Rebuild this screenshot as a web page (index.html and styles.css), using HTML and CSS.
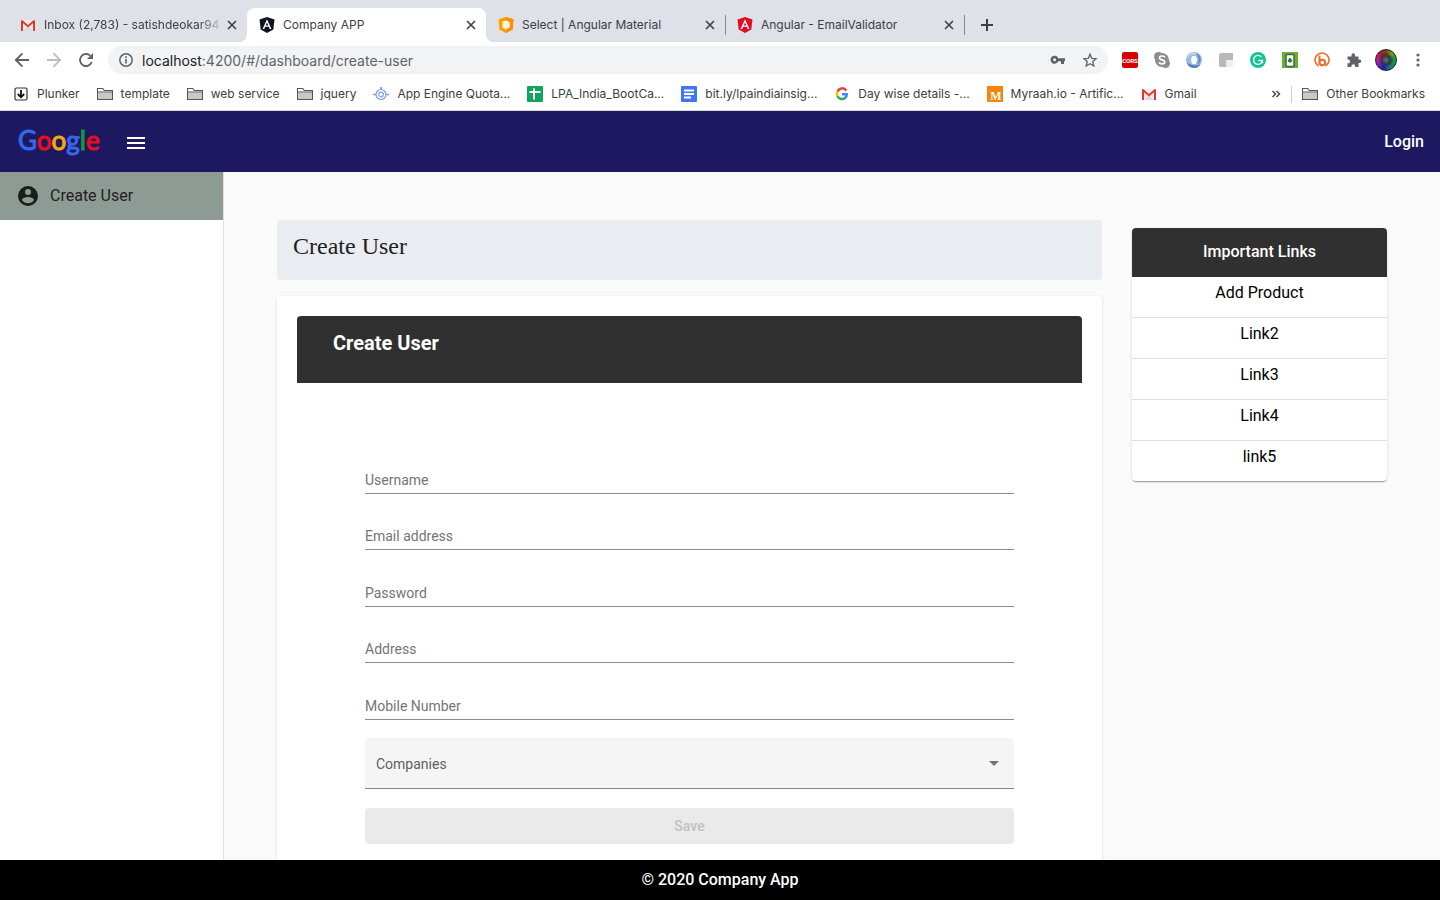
FILE: index.html
```html
<!DOCTYPE html>
<html lang="en">
<head>
<meta charset="utf-8">
<title>Company APP</title>
<link rel="stylesheet" href="styles.css">
</head>
<body>
<svg class="defs" aria-hidden="true">
  <symbol id="folder" viewBox="0 0 16 16"><path d="M.5 13.500V2.500h5.300l1.500 2h8.200v9z" fill="#fff" stroke="#555" stroke-width="1.100"/><path d="M1 6.500h14V13H1z" fill="#c8c8c8"/><path d="M1 6h14" stroke="#555"/></symbol>
  <symbol id="close" viewBox="0 0 16 16"><path d="M4 4l8 8M12 4l-8 8" stroke="#3c4043" stroke-width="1.600"/></symbol>
  <symbol id="gmail" viewBox="0 0 16 16"><path d="M1 3h14v11H1z" fill="#eee"/><path d="M3 14l5-5 5 5z" fill="#dcdcdc"/><path d="M1 3.200h1.600L8 8l5.400-4.800H15V14h-2V6.300L8 10.500 3 6.300V14H1z" fill="#dd3b2d"/></symbol>
  <symbol id="angular" viewBox="0 0 16 16"><path d="M8 0l7.500 2.600-1.200 10L8 16l-6.300-3.400L.5 2.600z" fill="currentColor"/><path d="M8 2.200L3.600 12h1.700l.9-2.200h3.600l.9 2.200h1.700zM8 5.500l1.300 3H6.700z" fill="#fff"/></symbol>
</svg>

<header class="browser">
  <div class="tabs">
    <div class="tab"><svg class="icon"><use href="#gmail"/></svg><span class="tab-title fade">Inbox (2,783) - satishdeokar94</span><button class="icon-btn" aria-label="Close tab"><svg class="icon"><use href="#close"/></svg></button></div>
    <div class="tab active"><svg class="icon dark"><use href="#angular"/></svg><span class="tab-title">Company APP</span><button class="icon-btn" aria-label="Close tab"><svg class="icon"><use href="#close"/></svg></button></div>
    <div class="tab divided"><svg class="icon" viewBox="0 0 16 16"><path d="M8 0l7.500 2.300-.8 10.200L8 16l-6.700-3.500L.5 2.300z" fill="#ffa000"/><path d="M8 0l7.500 2.300-.8 10.200L8 16z" fill="#ff8f00"/><path d="M4.500 4.500L8 3.500l3.500 1.500.5 5L8 12.500l-3.500-2z" fill="#fff3e0"/></svg><span class="tab-title">Select | Angular Material</span><button class="icon-btn" aria-label="Close tab"><svg class="icon"><use href="#close"/></svg></button></div>
    <div class="tab divided"><svg class="icon red"><use href="#angular"/></svg><span class="tab-title">Angular - EmailValidator</span><button class="icon-btn" aria-label="Close tab"><svg class="icon"><use href="#close"/></svg></button></div>
    <button class="icon-btn new-tab" aria-label="New tab"><svg class="icon" viewBox="0 0 16 16"><path d="M8 2v12M2 8h12" stroke="#3c4043" stroke-width="2"/></svg></button>
  </div>

  <div class="toolbar">
    <div class="nav">
      <button class="icon-btn" aria-label="Back"><svg class="icon" viewBox="0 0 16 16"><path d="M15 8H2M8.500 1.300L1.800 8l6.700 6.700" fill="none" stroke="#5f6368" stroke-width="1.900"/></svg></button>
      <button class="icon-btn" aria-label="Forward"><svg class="icon" viewBox="0 0 16 16"><path d="M1 8h13M7.500 1.300L14.200 8l-6.700 6.700" fill="none" stroke="#bcbec1" stroke-width="1.900"/></svg></button>
      <button class="icon-btn" aria-label="Reload"><svg class="icon" viewBox="0 0 16 16"><path d="M13.700 10A6 6 0 1 1 12.300 3.800" fill="none" stroke="#5f6368" stroke-width="1.900"/><path d="M15 1v6H9z" fill="#5f6368"/></svg></button>
    </div>
    <div class="address">
      <svg class="icon" viewBox="0 0 16 16"><circle cx="8" cy="8" r="6.200" fill="none" stroke="#5f6368" stroke-width="1.500"/><path d="M8 7v4.500M8 4.300v1.600" stroke="#5f6368" stroke-width="1.600"/></svg>
      <span class="url"><b>localhost</b>:4200/#/dashboard/create-user</span>
      <button class="icon-btn" aria-label="Saved passwords"><svg class="icon" viewBox="0 0 16 16"><path d="M8.200 6.200a4 4 0 1 0 0 3H11V12h3V9.200h1V6.200zM4.600 9.200a1.500 1.500 0 1 1 0-3 1.500 1.500 0 0 1 0 3z" fill="#5f6368"/></svg></button>
      <button class="icon-btn" aria-label="Bookmark page"><svg class="icon" viewBox="0 0 16 16"><path d="M8 2.200l1.700 4.100 4.400.4-3.300 2.900 1 4.400L8 11.700 4.200 14l1-4.400-3.300-2.900 4.400-.4z" fill="none" stroke="#5f6368" stroke-width="1.300"/></svg></button>
    </div>
    <div class="extensions">
      <svg class="icon" viewBox="0 0 16 16"><rect width="16" height="16" rx="2" fill="#d40000"/><text x="8" y="10.500" class="cors">CORS</text></svg>
      <svg class="icon" viewBox="0 0 16 16"><g fill="#8d8d8d"><circle cx="4.500" cy="4.500" r="4.500"/><circle cx="11.500" cy="11.500" r="4.500"/><circle cx="8" cy="8" r="7"/></g><path d="M11 5.300C10 3.500 5.500 3.500 5.500 5.900 5.500 8.400 10.700 7.300 10.700 9.900 10.700 12.400 6 12.300 5 10.300" fill="none" stroke="#fff" stroke-width="1.700"/></svg>
      <svg class="icon" viewBox="0 0 16 16"><circle cx="8" cy="8" r="8" fill="#9dbbdc"/><path d="M1 10.500A7.500 7.500 0 0 0 14.500 12.500C10 14.500 5 13.500 1 10.500z" fill="#4c7dba"/><path d="M10 1c5 2 6.500 8 1.500 12 2-4 1.500-8-1.500-12z" fill="#5c88c0"/><ellipse cx="8" cy="8" rx="2.800" ry="4.200" fill="#fff"/><path d="M2 5C4 1 8 1 10 2" fill="none" stroke="#d9e6f4"/></svg>
      <svg class="icon" viewBox="0 0 16 16"><path d="M3.500 1H15v7H8.500v7H3a2 2 0 0 1-2-2V3.500A2.500 2.500 0 0 1 3.500 1z" fill="#b9b9b9"/><path d="M8.500 8H15v5.500L13.500 15h-5z" fill="#eee"/></svg>
      <svg class="icon" viewBox="0 0 16 16"><circle cx="8" cy="8" r="8" fill="#15c39a"/><path d="M11.300 4.800A4.500 4.500 0 1 0 12.500 8.500H8.500M12.500 8.300v2.900" fill="none" stroke="#fff" stroke-width="1.300"/></svg>
      <svg class="icon" viewBox="0 0 16 16"><path d="M0 0h16v16H0z" fill="#63b32e"/><rect x="4" y="2.500" width="8" height="12" rx="1" fill="#fff" stroke="#555" stroke-width="1.500"/><g fill="#16891f"><circle cx="8" cy="7.300" r="1.200"/><circle cx="6.900" cy="8.800" r="1.200"/><circle cx="9.100" cy="8.800" r="1.200"/><path d="M7.500 8h1v3h-1z"/></g></svg>
      <svg class="icon" viewBox="0 0 16 16"><path d="M4.500 14A7 7 0 1 1 11.500 14" fill="none" stroke="#f4691f" stroke-width="1.600"/><path d="M5.500 3.500v7" stroke="#f4691f" stroke-width="2"/><circle cx="8.300" cy="10.500" r="2.800" fill="none" stroke="#f4691f" stroke-width="2"/></svg>
      <svg class="icon" viewBox="0 0 16 16"><path d="M1.500 4.500h4V3a1.800 1.800 0 0 1 3.600 0v1.500h3.400V7.500h1a1.800 1.800 0 0 1 0 3.600h-1V15H9.200v-.8a1.900 1.900 0 0 0-3.800 0v.8H1.500v-3.700h.7a1.900 1.900 0 0 0 0-3.800h-.7z" fill="#5f6368"/></svg>
      <span class="avatar"></span>
      <button class="icon-btn" aria-label="Browser menu"><svg class="icon" viewBox="0 0 16 16"><g fill="#5f6368"><circle cx="8" cy="3" r="1.600"/><circle cx="8" cy="8" r="1.600"/><circle cx="8" cy="13" r="1.600"/></g></svg></button>
    </div>
  </div>

  <nav class="bookmarks" aria-label="Bookmarks">
    <a href="#"><svg class="icon" viewBox="0 0 16 16"><rect x="2" y="2" width="12" height="12" rx="1.500" fill="#fff" stroke="#333" stroke-width="1.200"/><path d="M8 4v7M4.800 8L8 11.300 11.200 8" fill="none" stroke="#111" stroke-width="1.800"/></svg><span>Plunker</span></a>
    <a href="#"><svg class="icon"><use href="#folder"/></svg><span>template</span></a>
    <a href="#"><svg class="icon"><use href="#folder"/></svg><span>web service</span></a>
    <a href="#"><svg class="icon"><use href="#folder"/></svg><span>jquery</span></a>
    <a href="#"><svg class="icon" viewBox="0 0 16 16"><g fill="none" stroke="#7e9fee" stroke-width="1.200"><circle cx="8" cy="8.500" r="5"/><circle cx="8" cy="8.500" r="2.300"/><path d="M8 1v3M0 8.500h3M13 8.500h3" stroke-width="1.700"/></g></svg><span>App Engine Quota...</span></a>
    <a href="#"><svg class="icon" viewBox="0 0 16 16"><rect width="16" height="16" rx="1" fill="#0fa65a"/><path d="M7 2.500v11M2.500 6h11" stroke="#fff" stroke-width="2"/></svg><span>LPA_India_BootCa...</span></a>
    <a href="#"><svg class="icon" viewBox="0 0 16 16"><rect width="16" height="16" rx="1" fill="#4076f5"/><path d="M3 4.500h10M3 8h10M3 11.500h7" stroke="#fff" stroke-width="1.800"/></svg><span>bit.ly/lpaindiainsig...</span></a>
    <a href="#"><svg class="icon" viewBox="0 0 16 16"><g fill="none" stroke-width="2.500"><path d="M12.300 4.500A5 5 0 0 0 3.500 5.700" stroke="#ea4335"/><path d="M3.500 5.700a5 5 0 0 0 0 4.600" stroke="#fbbc05"/><path d="M3.500 10.300a5 5 0 0 0 7.700 1.500" stroke="#34a853"/><path d="M11.200 11.800A5 5 0 0 0 12.800 8.200H8" stroke="#4285f4"/></g></svg><span>Day wise details -...</span></a>
    <a href="#"><svg class="icon" viewBox="0 0 16 16"><path d="M0 0h16v16H0z" fill="#f7850b"/><text x="9" y="14" class="myraah">M</text></svg><span>Myraah.io - Artific...</span></a>
    <a href="#"><svg class="icon"><use href="#gmail"/></svg><span>Gmail</span></a>
    <button class="icon-btn overflow" aria-label="More bookmarks"><svg class="icon" viewBox="0 0 16 16"><path d="M4.500 5l3 3-3 3M8.500 5l3 3-3 3" fill="none" stroke="#4a4d51" stroke-width="1.500"/></svg></button>
    <a class="other" href="#"><svg class="icon"><use href="#folder"/></svg><span>Other Bookmarks</span></a>
  </nav>
</header>

<div class="app-bar">
  <a class="logo" href="#" aria-label="Google"><span class="blue">G</span><span class="crimson">o</span><span class="amber">o</span><span class="blue">g</span><span class="green">l</span><span class="crimson">e</span></a>
  <button class="icon-btn menu" aria-label="Toggle menu"><svg viewBox="0 0 18 12"><path d="M0 1h18M0 6h18M0 11h18" stroke="#fff" stroke-width="2"/></svg></button>
  <a class="login" href="#">Login</a>
</div>

<div class="workspace">
  <nav class="sidebar" aria-label="Main">
    <a href="#"><svg viewBox="0 0 20 20"><path fill="#191d1b" fill-rule="evenodd" d="M10 0a10 10 0 1 0 0 20 10 10 0 0 0 0-20zm0 3a3 3 0 1 1 0 6 3 3 0 0 1 0-6zm0 14.200a7.200 7.200 0 0 1-6-3.200c0-2 4-3.100 6-3.100s6 1.100 6 3.100a7.200 7.200 0 0 1-6 3.200z"/></svg><span>Create User</span></a>
  </nav>

  <main class="content">
    <div class="container">
      <section class="primary">
        <h1>Create User</h1>
        <div class="card form-card">
          <h2>Create User</h2>
          <form>
            <div class="fields">
              <label class="field"><span>Username</span><input type="text"></label>
              <label class="field"><span>Email address</span><input type="email"></label>
              <label class="field"><span>Password</span><input type="password"></label>
              <label class="field"><span>Address</span><input type="text"></label>
              <label class="field"><span>Mobile Number</span><input type="tel"></label>
            </div>
            <div class="select">
              <select aria-label="Companies"><option>Companies</option></select>
              <svg viewBox="0 0 10 5"><path d="M0 0h10L5 5z" fill="#757575"/></svg>
            </div>
            <button class="save" type="submit" disabled>Save</button>
          </form>
        </div>
      </section>
      <aside class="secondary">
        <div class="card links">
          <h3>Important Links</h3>
          <a href="#">Add Product</a>
          <a href="#">Link2</a>
          <a href="#">Link3</a>
          <a href="#">Link4</a>
          <a href="#">link5</a>
        </div>
      </aside>
    </div>
  </main>
</div>

<footer class="footer">© 2020 Company App</footer>
</body>
</html>
```

FILE: styles.css
```css
* { box-sizing: border-box; }

body {
  margin: 0;
  height: 100vh;
  display: flex;
  flex-direction: column;
  overflow: hidden;
  background: #fafafa;
  color: #1f1f1f;
  font-family: Roboto, "Liberation Sans", sans-serif;
  font-size: 16px;
}

a { color: inherit; text-decoration: none; }
.defs { display: none; }
.icon { display: block; flex: none; width: 16px; height: 16px; }
.icon-btn { display: block; flex: none; padding: 0; border: 0; background: none; }
.dark { color: #10131f; }
.red { color: #dd0f20; }

/* Browser frame */
.browser {
  flex: none;
  background: #fff;
  border-bottom: 1px solid #d5d8dc;
  color: #3c4043;
  font-family: Inter, Roboto, sans-serif;
  font-size: 12px;
}

.tabs {
  display: flex;
  align-items: flex-end;
  height: 42px;
  padding-left: 8px;
  background: #dee1e8;
}

.tab {
  position: relative;
  display: flex;
  align-items: center;
  gap: 8px;
  width: 239px;
  height: 34px;
  padding: 0 7px 0 12px;
}

.tab-title { flex: 1; padding-bottom: 2px; white-space: nowrap; }
.fade { margin-right: -8px; mask-image: linear-gradient(to right, #000 86%, transparent); }
.divided::after {
  content: "";
  position: absolute;
  right: -1px;
  top: 7px;
  width: 1px;
  height: 20px;
  background: #898c92;
}

.active { background: #fff; border-radius: 8px 8px 0 0; }
.active::before,
.active::after {
  content: "";
  position: absolute;
  bottom: 0;
  width: 8px;
  height: 8px;
}
.active::before { right: 100%; background: radial-gradient(circle at 0 0, transparent 8px, #fff 8px); }
.active::after { left: 100%; background: radial-gradient(circle at 100% 0, transparent 8px, #fff 8px); }
.new-tab { margin: 0 15px 9px; }

.toolbar { display: flex; align-items: center; height: 36px; padding: 0 14px; }
.nav { display: flex; gap: 16px; margin-right: 14px; }

.address {
  flex: 1;
  display: flex;
  align-items: center;
  gap: 16px;
  height: 28px;
  padding: 0 10px;
  border-radius: 14px;
  background: #f1f3f4;
}

.url { flex: 1; margin-left: -8px; font-size: 14px; color: #5f6368; }
.url b { font-weight: 400; color: #202124; }
.extensions { display: flex; align-items: center; gap: 16px; margin-left: 14px; }
.cors { font: 700 6px Roboto, sans-serif; fill: #fff; text-anchor: middle; }
.myraah { font: 700 12px "Liberation Serif", serif; fill: #fff; text-anchor: middle; }

.avatar {
  width: 22px;
  height: 22px;
  margin: 0 -3px;
  border: 1px solid #222;
  border-radius: 50%;
  background:
    radial-gradient(circle, #63767d 0, #303444 30%, transparent 55%),
    conic-gradient(#7b4010, #7aa010, #13a02c, #0f8f5f, #0f6f99, #1a1da0, #8a18d0, #d01898, #c01030, #7b4010);
}

.bookmarks { display: flex; align-items: center; gap: 17px; height: 32px; padding: 0 15px 0 13px; }
.bookmarks a { display: flex; align-items: center; gap: 8px; white-space: nowrap; }
.bookmarks span { padding-bottom: 2px; }
.overflow { margin: 0 -10px 0 auto; }
.bookmarks .other { padding-left: 10px; border-left: 1px solid #c9cbce; }

/* Application bar */
.app-bar {
  flex: none;
  display: flex;
  align-items: center;
  height: 61px;
  padding: 0 16px 0 18px;
  background: #1d1860;
  color: #fff;
  font-weight: 500;
}

.logo { padding-bottom: 4px; font: 400 26px/32px Lato, sans-serif; -webkit-text-stroke: 1px; }
.blue { color: #3369e8; }
.crimson { color: #e60f19; }
.amber { color: #f3a80c; }
.green { color: #0f9a3c; }
.menu { margin-left: 27px; padding-top: 2px; }
.menu svg { display: block; width: 18px; height: 12px; }
.login { margin-left: auto; }

.workspace { flex: 1; display: flex; min-height: 0; }
.sidebar { flex: none; width: 224px; background: #fff; border-right: 1px solid #e0e0e0; }
.sidebar a {
  display: flex;
  align-items: center;
  gap: 12px;
  height: 48px;
  padding: 0 18px;
  background: #8e9b95;
}
.sidebar svg { width: 20px; height: 20px; }
.sidebar span { padding-bottom: 2px; }

.content { flex: 1; min-width: 0; overflow: hidden; }
.container { display: flex; max-width: 1140px; margin: 0 auto; }
.primary { width: 75%; padding: 48px 15px; }
.secondary { width: 25%; padding: 56px 15px; }

h1 {
  height: 60px;
  margin: 0 0 16px;
  padding: 12px 16px;
  border-radius: 4px;
  background: #e9ecf0;
  font: 400 24px/28px "Liberation Serif", serif;
}

.card {
  border-radius: 4px;
  background: #fff;
  box-shadow: 0 2px 1px -1px rgba(0, 0, 0, .2), 0 1px 1px rgba(0, 0, 0, .14), 0 1px 3px rgba(0, 0, 0, .12);
}

.form-card { padding: 20px; }
h2 {
  height: 67px;
  margin: 0;
  padding: 15px 36px;
  border-radius: 4px 4px 0 0;
  background: #303030;
  color: #fff;
  font-weight: 700;
  font-size: 20px;
  line-height: 24px;
}

form { padding: 54px 68px 0; font-size: 14px; }

.fields { display: grid; grid-auto-rows: 1fr; height: 283px; }
.field { display: grid; border-bottom: 1px solid #8c8c8c; color: #757575; }
.field span,
.field input { grid-area: 1 / 1; align-self: end; }
.field span { line-height: 26px; }
.field input { width: 100%; height: 26px; padding: 0; border: 0; background: none; font: inherit; outline: 0; }

.select {
  display: grid;
  height: 51px;
  margin-top: 18px;
  border-bottom: 1px solid #858585;
  border-radius: 4px 4px 0 0;
  background: #f5f5f5;
}
.select select {
  grid-area: 1 / 1;
  width: 100%;
  padding: 1px 11px 0;
  border: 0;
  background: none;
  appearance: none;
  color: #5f5f5f;
  font: inherit;
}
.select svg { grid-area: 1 / 1; place-self: center end; width: 10px; height: 5px; margin-right: 15px; pointer-events: none; }

.save {
  display: block;
  width: 100%;
  height: 36px;
  margin-top: 19px;
  border: 0;
  border-radius: 4px;
  background: #eaeaea;
  color: #c2c2c2;
  font: 500 14px Roboto, sans-serif;
}

.links { overflow: hidden; text-align: center; color: #000; }
.links h3 { margin: 0; padding-bottom: 1px; background: #303030; color: #fff; font-size: 16px; font-weight: 500; line-height: 48px; }
.links a { display: block; height: 41px; padding-top: 4px; border-bottom: 1px solid #e0e0e0; line-height: 24px; }
.links a:last-child { height: 40px; border-bottom: 0; }

.footer {
  flex: none;
  background: #000;
  color: #fff;
  font-weight: 500;
  line-height: 40px;
  text-align: center;
}
```
